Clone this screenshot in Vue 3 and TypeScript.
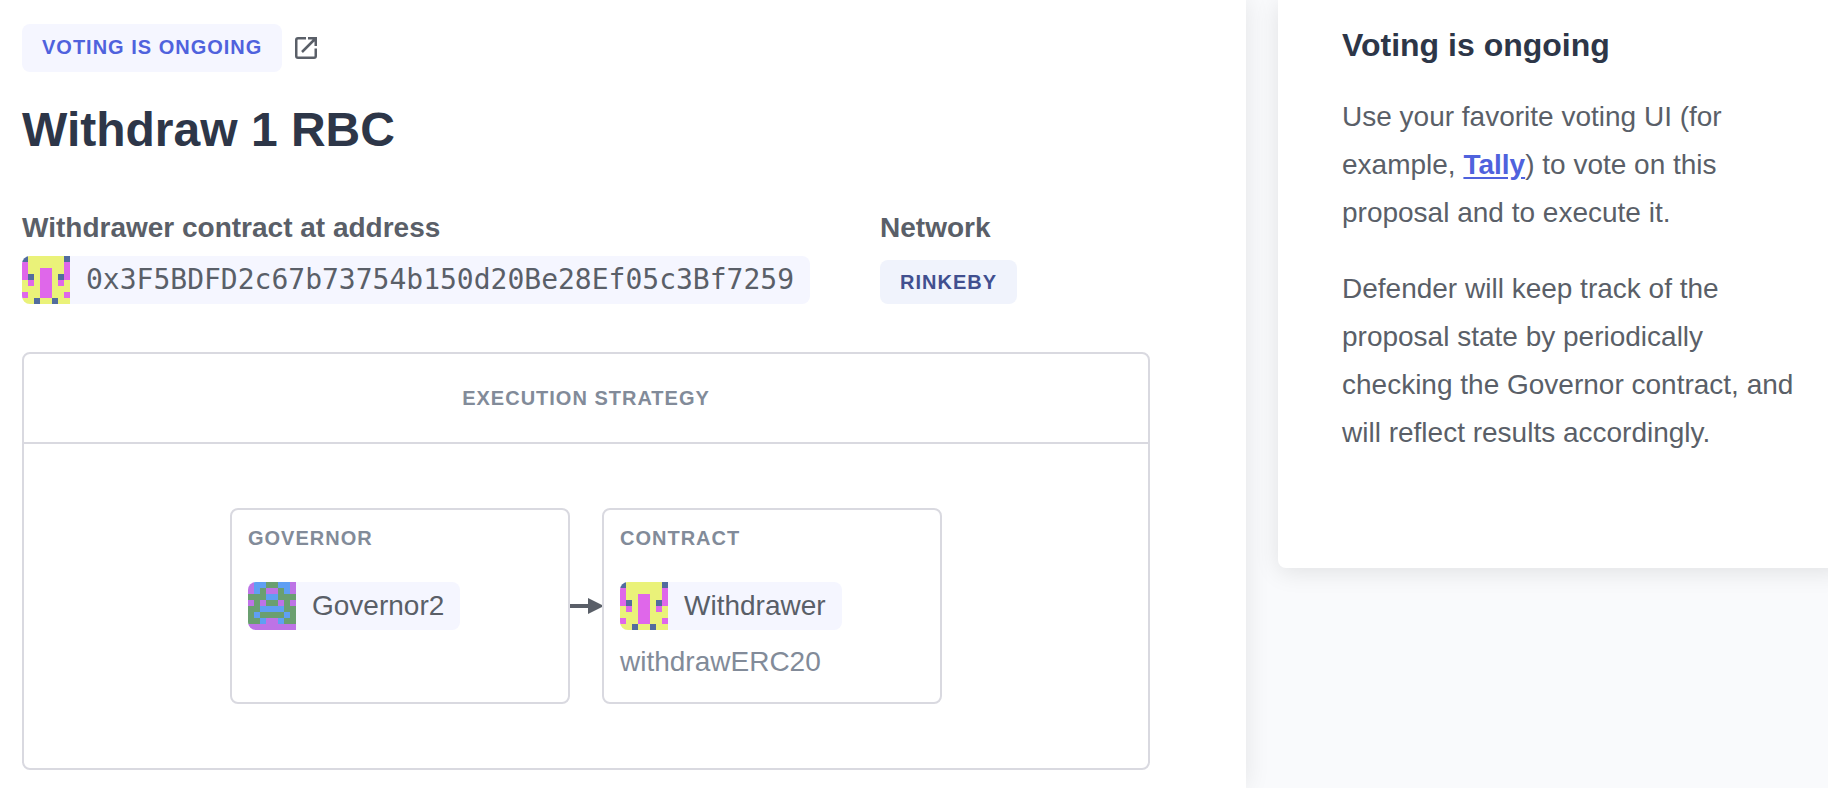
<script setup lang="ts">
import { h, type FunctionalComponent } from 'vue'

interface IdenticonProps {
  rows: string[]
  palette: Record<string, string>
}

const Identicon: FunctionalComponent<IdenticonProps> = (props) =>
  h(
    'svg',
    { viewBox: '0 0 8 8', 'aria-hidden': 'true', 'shape-rendering': 'crispEdges' },
    props.rows.flatMap((row, y) =>
      [...row].map((key, x) => h('rect', { x, y, width: 1, height: 1, fill: props.palette[key] })),
    ),
  )
Identicon.props = ['rows', 'palette']

const withdrawerIcon: IdenticonProps = {
  rows: ['byyyyyyb', 'pyyyyyyp', 'pyyppyyp', 'pbyppybp', 'ypyppypy', 'yyyppyyy', 'pyyppyyp', 'yybyybyy'],
  palette: { b: '#526c9e', y: '#eaf279', p: '#df67ea' },
}

const governorIcon: IdenticonProps = {
  rows: ['pbbggbbp', 'pbgppgbp', 'gggbbggg', 'pgpggpgp', 'ggbbbbgg', 'gbggggbg', 'ggbppbgg', 'pppppppp'],
  palette: { b: '#5f9ff3', g: '#6a9f70', p: '#bd73e6' },
}

const address = '0x3F5BDFD2c67b73754b150d20Be28Ef05c3Bf7259'
</script>

<template>
  <div class="page">
    <main class="proposal">
      <div class="status">
        <span class="badge">Voting is ongoing</span>
        <a class="external" href="#" aria-label="Open proposal">
          <svg viewBox="0 0 22 22" fill="none" stroke="currentColor" stroke-width="2.5" aria-hidden="true">
            <path d="M11 1.25H3Q1.25 1.25 1.25 3V19Q1.25 20.75 3 20.75H19Q20.75 20.75 20.75 19V11.5" />
            <path d="M13 1.25H20.75V9M20.5 1.5L7 15" />
          </svg>
        </a>
      </div>

      <h1>Withdraw 1 RBC</h1>

      <div class="facts">
        <section>
          <h2>Withdrawer contract at address</h2>
          <div class="chip mono">
            <Identicon class="identicon" v-bind="withdrawerIcon" />
            <span>{{ address }}</span>
          </div>
        </section>
        <section>
          <h2>Network</h2>
          <span class="badge network">Rinkeby</span>
        </section>
      </div>

      <section class="strategy">
        <h3 class="strategy-title">Execution strategy</h3>
        <div class="flow">
          <article class="node">
            <h4>Governor</h4>
            <div class="chip">
              <Identicon class="identicon" v-bind="governorIcon" />
              <span>Governor2</span>
            </div>
          </article>
          <svg class="arrow" viewBox="0 0 32 16" aria-hidden="true">
            <path d="M0 6H18V0L34 8L18 16V10H0Z" fill="currentColor" />
          </svg>
          <article class="node">
            <h4>Contract</h4>
            <div class="chip">
              <Identicon class="identicon" v-bind="withdrawerIcon" />
              <span>Withdrawer</span>
            </div>
            <p class="method">withdrawERC20</p>
          </article>
        </div>
      </section>
    </main>

    <aside class="side">
      <div class="card">
        <h2 class="card-title">Voting is ongoing</h2>
        <p>Use your favorite voting UI (for example, <a href="#">Tally</a>) to vote on this proposal and to execute it.</p>
        <p>
          Defender will keep track of the proposal state by periodically checking the Governor contract, and will
          reflect results accordingly.
        </p>
      </div>
    </aside>
  </div>
</template>

<style>
body {
  margin: 0;
  background: #f9fafc;
}
</style>

<style scoped>
.page {
  display: grid;
  grid-template-columns: minmax(0, 1fr) 582px;
  min-height: 100vh;
  overflow: hidden;
  font-family: "Liberation Sans", Arial, sans-serif;
  font-size: 28px;
  line-height: 48px;
  color: #5a5f68;
}

h1,
h2,
h3,
h4,
p {
  margin: 0;
}

.proposal {
  box-sizing: border-box;
  padding: 24px 96px 16px 22px;
  background: #fff;
  box-shadow: 0 0 24px rgba(0, 0, 0, 0.09);
}

.status {
  display: flex;
  align-items: center;
  gap: 13px;
}

.badge {
  display: inline-block;
  padding: 11px 20px 13px;
  border-radius: 8px;
  background: #f5f6ff;
  color: #4f62dd;
  font-size: 20px;
  font-weight: 700;
  line-height: 24px;
  letter-spacing: 1px;
  text-transform: uppercase;
}

.external {
  display: flex;
  color: #5a5f68;
}

.external svg {
  width: 22px;
  height: 22px;
}

h1 {
  margin-top: 30px;
  font-size: 48px;
  line-height: 56px;
  color: #2d3648;
}

.facts {
  display: flex;
  gap: 70px;
  margin-top: 46px;
}

h2 {
  font-size: 28px;
  line-height: 48px;
}

.facts .chip {
  margin-top: 4px;
}

.network {
  display: block;
  width: fit-content;
  margin-top: 8px;
  padding: 10px 20px;
  background: #f0f3fc;
  color: #414f8f;
}

.chip {
  display: flex;
  width: fit-content;
  overflow: hidden;
  border-radius: 8px;
  background: #f5f6ff;
}

.chip span {
  padding: 0 16px;
}

.mono {
  font-family: "DejaVu Sans Mono", monospace;
}

.identicon {
  flex: none;
  width: 48px;
  height: 48px;
}

.strategy {
  margin-top: 48px;
  border: 2px solid #d9d9e0;
  border-radius: 8px;
}

.strategy-title,
h4 {
  color: #828b99;
  font-size: 20px;
  line-height: 24px;
  letter-spacing: 1px;
  text-transform: uppercase;
}

.strategy-title {
  padding: 32px;
  border-bottom: 2px solid #d9d9e0;
  text-align: center;
}

.flow {
  display: flex;
  justify-content: center;
  padding: 64px 0;
}

.node {
  box-sizing: border-box;
  width: 340px;
  padding: 16px;
  border: 2px solid #d9d9e0;
  border-radius: 8px;
}

.node .chip {
  margin-top: 32px;
}

.method {
  margin-top: 8px;
  color: #828b99;
}

.arrow {
  flex: none;
  align-self: center;
  width: 32px;
  height: 16px;
  overflow: visible;
  color: #5a5f68;
}

.side {
  padding-left: 32px;
}

.card {
  margin-right: -16px;
  padding: 21px 32px 111px 64px;
  border-radius: 0 0 8px 8px;
  background: #fff;
  box-shadow: 0 4px 24px rgba(0, 0, 0, 0.1);
}

.card-title {
  margin-bottom: 24px;
  font-size: 32px;
  color: #2d3648;
}

.card p + p {
  margin-top: 28px;
}

.card a {
  color: #4f62dd;
  font-weight: 700;
  text-underline-offset: 3px;
}
</style>
